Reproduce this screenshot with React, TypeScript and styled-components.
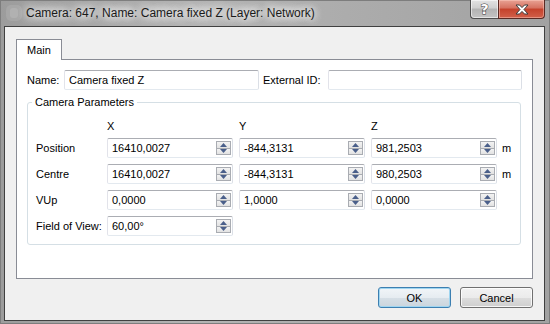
import styled, { createGlobalStyle } from "styled-components";

const GlobalStyle = createGlobalStyle`
  html, body {
    margin: 0;
    padding: 0;
    background: #a6a6a6;
  }
  body {
    font-family: "Liberation Sans", Arial, sans-serif;
    font-size: 11px;
    color: #000;
  }
`;

const rows = [
  { label: "Position", values: ["16410,0027", "-844,3131", "981,2503"], unit: "m" },
  { label: "Centre", values: ["16410,0027", "-844,3131", "980,2503"], unit: "m" },
  { label: "VUp", values: ["0,0000", "1,0000", "0,0000"], unit: "" },
  { label: "Field of View:", values: ["60,00°"], unit: "" },
];

const Arrow = ({ down }: { down?: boolean }) => (
  <svg width="7" height="4" viewBox="0 0 7 4">
    <path d={down ? "M0 0 H7 L3.5 4 Z" : "M0 4 H7 L3.5 0 Z"} fill="#4a5f8a" />
  </svg>
);

const SpinField = ({ value }: { value: string }) => (
  <Field>
    <Value>{value}</Value>
    <Spinner>
      <SpinHalf>
        <Arrow />
      </SpinHalf>
      <SpinHalf>
        <Arrow down />
      </SpinHalf>
    </Spinner>
  </Field>
);

const App = () => {
  return (
    <Window>
      <GlobalStyle />
      <TitleBar>
        <WinIcon>
          <svg width="18" height="18" viewBox="0 0 18 18">
            <rect x="1" y="1" width="16" height="16" rx="5" fill="#ffffff" opacity="0.1" />
            <rect x="5" y="4" width="8" height="10" rx="3" fill="#ffffff" opacity="0.12" />
          </svg>
        </WinIcon>
        <Title>Camera: 647, Name: Camera fixed Z (Layer: Network)</Title>
        <CaptionButtons>
          <HelpButton>
            <HelpGlyph>?</HelpGlyph>
          </HelpButton>
          <CloseButton>
            <svg width="14" height="11" viewBox="0 0 14 11">
              <path
                d="M1 1 H4.5 L7 3.6 L9.5 1 H13 L9 5.5 L13 10 H9.5 L7 7.4 L4.5 10 H1 L5 5.5 Z"
                fill="#ffffff"
                stroke="#3b3b3b"
                strokeWidth="1"
                strokeLinejoin="round"
              />
            </svg>
          </CloseButton>
        </CaptionButtons>
      </TitleBar>
      <Client>
        <TabBar>
          <Tab>Main</Tab>
        </TabBar>
        <Panel>
          <TopRow>
            <Label>Name:</Label>
            <Field>
              <Value>Camera fixed Z</Value>
            </Field>
            <SideLabel>External ID:</SideLabel>
            <Field />
          </TopRow>
          <Group>
            <Legend>Camera Parameters</Legend>
            <ParamGrid>
              <span />
              <Header>X</Header>
              <Header>Y</Header>
              <Header>Z</Header>
              <span />
              {rows.map((r) => (
                <Row key={r.label}>
                  <Label>{r.label}</Label>
                  {r.values.map((v, i) => (
                    <SpinField key={i} value={v} />
                  ))}
                  {r.values.length < 3 && <Blank $span={3 - r.values.length} />}
                  <Unit>{r.unit}</Unit>
                </Row>
              ))}
            </ParamGrid>
          </Group>
        </Panel>
        <ButtonRow>
          <DialogButton $default>OK</DialogButton>
          <DialogButton>Cancel</DialogButton>
        </ButtonRow>
      </Client>
    </Window>
  );
};

export default App;

const Window = styled.div`
  width: 550px;
  height: 324px;
  box-sizing: border-box;
  padding: 0 5px 3px 4px;
  display: flex;
  flex-direction: column;
  background: linear-gradient(90deg, #9c9c9c 0%, #b4b4b4 35%, #aaaaaa 70%, #a2a2a2 100%);
  box-shadow: inset 0 0 0 1px #7d7d7d;
  overflow: hidden;
`;

const TitleBar = styled.div`
  height: 26px;
  display: flex;
  align-items: flex-start;
`;

const WinIcon = styled.div`
  margin: 4px 0 0 1px;
  width: 18px;
  height: 18px;
`;

const Title = styled.div`
  margin-left: 3px;
  line-height: 26px;
  font-size: 12px;
  color: #1a1a1a;
  text-shadow: 0 0 8px #fff, 0 0 8px #fff, 0 0 12px #fff;
  white-space: nowrap;
`;

const CaptionButtons = styled.div`
  margin-left: auto;
  display: flex;
  height: 19px;
`;

const HelpButton = styled.div`
  width: 28px;
  height: 19px;
  box-sizing: border-box;
  border: 1px solid #4e4e4e;
  border-top: none;
  border-right: none;
  border-bottom-left-radius: 4px;
  background: linear-gradient(180deg, #e3e3e3 0%, #cfcfcf 45%, #b3b3b3 50%, #c4c4c4 100%);
  box-shadow: inset 0 0 0 1px rgba(255, 255, 255, 0.55);
  display: flex;
  align-items: center;
  justify-content: center;
`;

const HelpGlyph = styled.span`
  font-family: "DejaVu Sans", sans-serif;
  font-weight: bold;
  font-size: 14px;
  line-height: 14px;
  color: #fff;
  -webkit-text-stroke: 1px #3a3a3a;
  paint-order: stroke fill;
`;

const CloseButton = styled.div`
  width: 47px;
  height: 19px;
  box-sizing: border-box;
  border: 1px solid #5a2a24;
  border-top: none;
  border-bottom-right-radius: 4px;
  background: linear-gradient(180deg, #e8a294 0%, #d5705f 45%, #c4412b 50%, #d2604a 100%);
  box-shadow: inset 0 0 0 1px rgba(255, 210, 200, 0.45);
  display: flex;
  align-items: center;
  justify-content: center;
`;

const Client = styled.div`
  flex: 1;
  border: 1px solid #404040;
  background: #f0f0f0;
  padding: 12px 11px 0 11px;
  display: flex;
  flex-direction: column;
`;

const TabBar = styled.div`
  display: flex;
  height: 20px;
`;

const Tab = styled.div`
  width: 46px;
  height: 21px;
  box-sizing: border-box;
  border: 1px solid #898c95;
  border-bottom: none;
  background: #fff;
  padding-left: 10px;
  line-height: 20px;
  position: relative;
  z-index: 1;
`;

const Panel = styled.div`
  height: 220px;
  box-sizing: border-box;
  border: 1px solid #898c95;
  background: #fff;
  padding: 10px 10px 0 10px;
`;

const TopRow = styled.div`
  display: grid;
  grid-template-columns: 37px 195px 69px 194px;
  align-items: center;
  height: 20px;
`;

const Label = styled.span`
  white-space: nowrap;
`;

const SideLabel = styled.span`
  padding-left: 4px;
  white-space: nowrap;
`;

const Field = styled.div`
  height: 20px;
  box-sizing: border-box;
  border: 1px solid;
  border-color: #abadb3 #dbdfe6 #e3e9ef #e2e3ea;
  border-radius: 2px;
  background: #fff;
  padding: 1px 1px 2px 4px;
  display: flex;
  align-items: center;
`;

const Value = styled.span`
  flex: 1;
  white-space: nowrap;
`;

const Spinner = styled.div`
  width: 15px;
  align-self: stretch;
  display: flex;
  flex-direction: column;
  margin-top: 1px;
`;

const SpinHalf = styled.div`
  flex: 1;
  box-sizing: border-box;
  border: 1px solid #a9acb2;
  background: linear-gradient(180deg, #f3f3f3 0%, #e2e2e2 100%);
  display: flex;
  align-items: center;
  justify-content: center;
  & + & {
    border-top: none;
  }
`;

const Group = styled.fieldset`
  margin: 6px 0 0 0;
  width: 494px;
  box-sizing: border-box;
  border: 1px solid #d5dfe5;
  border-radius: 3px;
  padding: 11px 0 8px 8px;
`;

const Legend = styled.legend`
  margin-left: -4px;
  padding: 0 3px;
  line-height: 13px;
`;

const ParamGrid = styled.div`
  display: grid;
  grid-template-columns: 65px repeat(3, 126px) auto;
  column-gap: 6px;
  row-gap: 6px;
  align-items: center;
`;

const Header = styled.span`
  line-height: 12px;
`;

const Row = styled.div`
  display: contents;
`;

const Blank = styled.span<{ $span: number }>`
  grid-column: span ${(p) => p.$span};
`;

const Unit = styled.span`
  margin-left: -1px;
`;

const ButtonRow = styled.div`
  display: flex;
  justify-content: flex-end;
  gap: 9px;
  margin-top: 8px;
`;

const DialogButton = styled.div<{ $default?: boolean }>`
  width: 73px;
  height: 21px;
  box-sizing: border-box;
  border: 1px solid ${(p) => (p.$default ? "#3c7fb1" : "#707070")};
  border-radius: 3px;
  background: ${(p) =>
    p.$default
      ? "linear-gradient(180deg, #f1f5f8 0%, #e6ecf1 50%, #d6dfe6 51%, #cbd5dd 100%)"
      : "linear-gradient(180deg, #f2f2f2 0%, #ebebeb 50%, #dddddd 51%, #cfcfcf 100%)"};
  box-shadow: inset 0 0 0 1px ${(p) => (p.$default ? "#9fd5f0" : "rgba(255,255,255,0.8)")};
  display: flex;
  align-items: center;
  justify-content: center;
`;
